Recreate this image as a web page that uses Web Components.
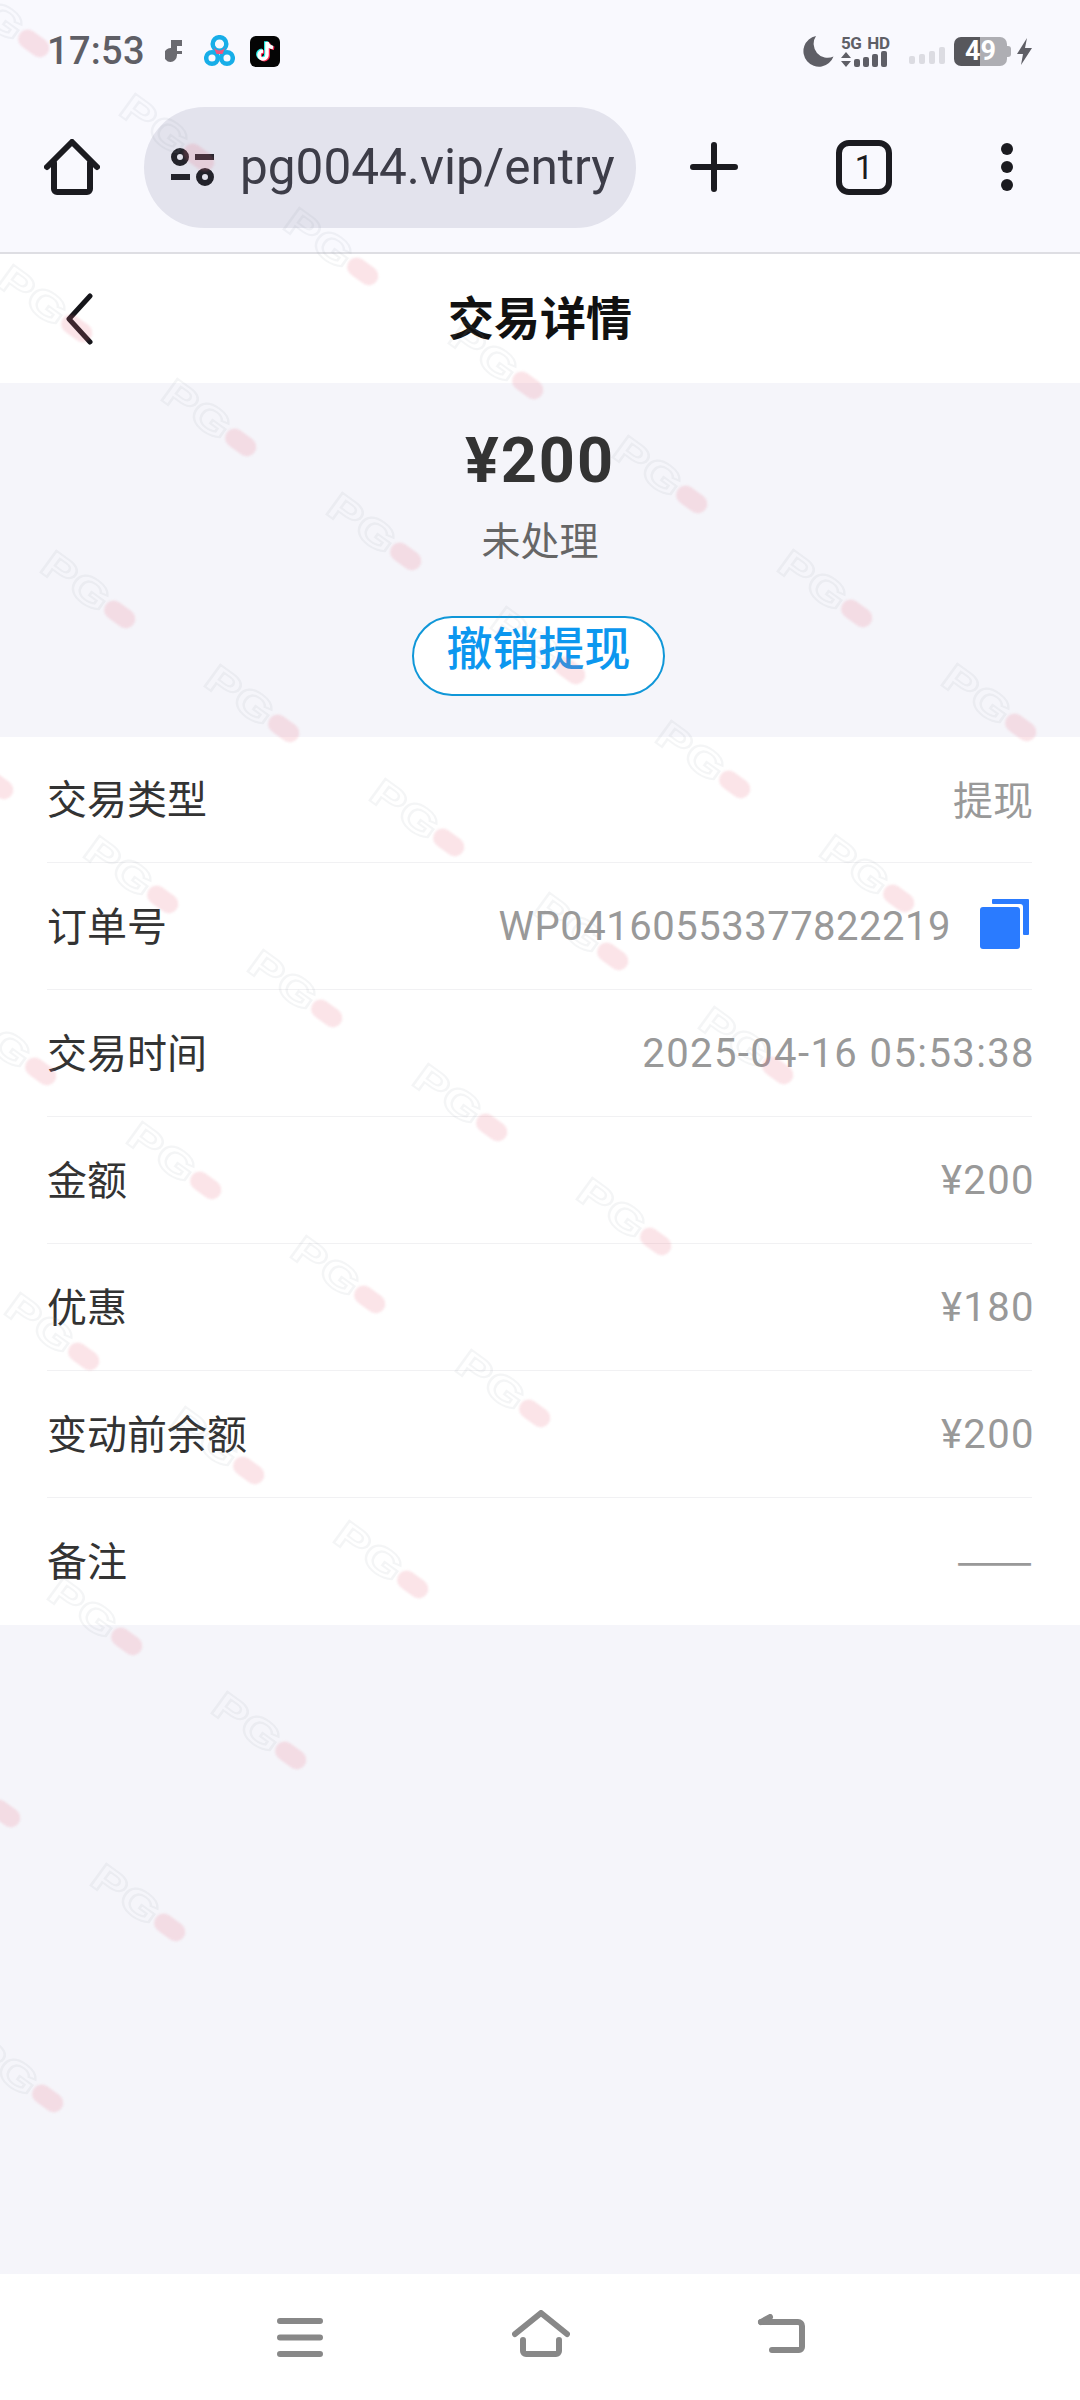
<!DOCTYPE html>
<html lang="zh">
<head>
<meta charset="utf-8">
<title>交易详情</title>
<style>
  html, body { margin: 0; padding: 0; }
  body {
    position: relative;
    width: 1080px;
    height: 2400px;
    overflow: hidden;
    display: flex;
    flex-direction: column;
    background: #f5f5fa;
    font-family: Roboto, "Noto Sans CJK SC", sans-serif;
  }
</style>
</head>
<body>
  <phone-status></phone-status>
  <browser-bar url="pg0044.vip/entry"></browser-bar>
  <page-header>交易详情</page-header>
  <tx-summary amount="¥200" state="未处理" action="撤销提现"></tx-summary>
  <tx-list>
    <tx-row label="交易类型" cjk>提现</tx-row>
    <tx-row label="订单号" copy>WP04160553377822219</tx-row>
    <tx-row label="交易时间">2025-04-16 05:53:38</tx-row>
    <tx-row label="金额">¥200</tx-row>
    <tx-row label="优惠">¥180</tx-row>
    <tx-row label="变动前余额">¥200</tx-row>
    <tx-row label="备注" cjk last>——</tx-row>
  </tx-list>
  <nav-bar></nav-bar>
  <water-marks></water-marks>

<script>
class PhoneStatus extends HTMLElement {
  constructor() {
    super();
    this.attachShadow({ mode: "open" }).innerHTML = `
      <style>
        :host { display: flex; align-items: center; height: 90px; padding: 12px 48px 0 47px; box-sizing: border-box; background: #f9f9fe; color: #5f5f66; }
        .time { font: 500 38px Roboto, sans-serif; width: 118px; letter-spacing: .3px; }
        svg { display: block; flex: none; }
        .right { margin-left: auto; display: flex; align-items: center; }
        .net { font: 700 17px/16px Roboto, sans-serif; letter-spacing: -.4px; word-spacing: 2px; white-space: nowrap; width: 47px; margin-left: 7px; color: #5f5f66; }
        .battery {
          position: relative; width: 53px; height: 29px; margin-left: 9px; border-radius: 7px;
          background: linear-gradient(90deg, #57575c 0 50%, #aeaeb3 50% 100%);
          color: #fff; font: 700 27px/29px Roboto, sans-serif; text-align: center;
        }
        .battery::after { content: ""; position: absolute; right: -4px; top: 9px; width: 4px; height: 11px; border-radius: 0 3px 3px 0; background: #aeaeb3; }
      </style>
      <div class="time">17:53</div>
      <svg width="18" height="24" viewBox="0 0 18 24" style="margin-right:21px"><path d="M6 1h11v6h-5v9a6.500 7 0 1 1-6-7z" fill="#6a6a70"/><rect x="0" y="12" width="17" height="3" fill="#6a6a70"/></svg>
      <svg width="31" height="32" viewBox="0 0 31 32" fill="none" style="margin-right:15px">
        <circle cx="8" cy="23" r="5.800" stroke="#18aee8" stroke-width="4.500"/>
        <circle cx="23" cy="23" r="5.800" stroke="#18aee8" stroke-width="4.500"/>
        <circle cx="15.500" cy="9" r="6.800" stroke="#18aee8" stroke-width="4.500"/>
        <path d="M9.500 12a7 7 0 0 0 12 0l-3 7h-6z" fill="#f2557e"/>
        <circle cx="15.500" cy="9" r="4" fill="#f9f9fe"/>
      </svg>
      <svg width="30" height="31" viewBox="0 0 30 31">
        <rect width="30" height="31" rx="6" fill="#050505"/>
        <path d="M17 6v13a4 4 0 1 1-4-4M17 6c.5 3 2.500 5 6 5.500" fill="none" stroke="#25f4ee" stroke-width="3.500" transform="translate(-1.200 -.8)"/>
        <path d="M17 6v13a4 4 0 1 1-4-4M17 6c.5 3 2.500 5 6 5.500" fill="none" stroke="#fe2c55" stroke-width="3.500" transform="translate(1.200 .8)"/>
        <path d="M17 6v13a4 4 0 1 1-4-4M17 6c.5 3 2.500 5 6 5.500" fill="none" stroke="#fff" stroke-width="3.500"/>
      </svg>
      <div class="right">
        <svg width="33" height="33" viewBox="0 0 33 33"><path d="M15 1a15.500 15.500 0 1 0 17.500 20.500A14 14 0 0 1 15 1z" fill="#5f5f66"/></svg>
        <div class="net">5G HD<svg width="47" height="17" viewBox="0 0 47 17" fill="#5f5f66"><path d="M5 1l5 6H0zM5 16l5-6H0z"/><rect x="13" y="8" width="6" height="8" rx="2"/><rect x="22" y="6" width="6" height="10" rx="2"/><rect x="31" y="3" width="6" height="13" rx="2"/><rect x="40" y="0" width="6" height="16" rx="2"/></svg></div>
        <svg width="36" height="20" viewBox="0 0 36 20" fill="#dcdce2" style="margin:10px 0 0 21px"><rect x="0" y="10" width="6" height="8" rx="2"/><rect x="10" y="8" width="6" height="10" rx="2"/><rect x="20" y="5" width="6" height="13" rx="2"/><rect x="30" y="1" width="6" height="17" rx="2"/></svg>
        <div class="battery">49</div>
        <svg width="15" height="27" viewBox="0 0 15 27" style="margin-left:10px"><path d="M10 0L0 16h6l-2 11 11-17H8z" fill="#5f5f66"/></svg>
      </div>
    `;
  }
}

class BrowserBar extends HTMLElement {
  constructor() {
    super();
    this.attachShadow({ mode: "open" }).innerHTML = `
      <style>
        :host { display: flex; align-items: center; height: 164px; padding: 17px 0 25px 44px; box-sizing: border-box; background: #f9f9fe; border-bottom: 2px solid #dedee3; color: #1b1b20; }
        svg { display: block; flex: none; }
        .pill { width: 492px; height: 121px; margin-left: 44px; border-radius: 61px; background: #e3e3ed; display: flex; align-items: center; padding-left: 26px; box-sizing: border-box; overflow: hidden; flex: none; }
        .url { margin-left: 25px; font: 400 49.500px Roboto, sans-serif; color: #3d3d48; white-space: nowrap; }
        .tab { width: 56px; height: 55px; margin-left: 98px; border: 6px solid #1b1b20; border-radius: 13px; box-sizing: border-box; display: flex; align-items: center; justify-content: center; font: 400 33px Roboto, sans-serif; flex: none; }
      </style>
      <svg width="56" height="56" viewBox="0 0 56 56" fill="none" stroke="#1b1b20" stroke-width="6" stroke-linejoin="round" stroke-linecap="round"><path d="M3 28L28 3l25 25"/><path d="M10 24v26a3 3 0 0 0 3 3h30a3 3 0 0 0 3-3V24"/></svg>
      <div class="pill">
        <svg width="45" height="38" viewBox="0 0 45 38" fill="none" stroke="#23232b" stroke-width="6"><circle cx="10" cy="9" r="6"/><path d="M25 9h19M1 29h19"/><circle cx="35" cy="29" r="6"/></svg>
        <span class="url">${this.getAttribute("url")}</span>
      </div>
      <svg width="48" height="50" viewBox="0 0 48 50" stroke="#1b1b20" stroke-width="6" stroke-linecap="round" style="margin-left:54px"><path d="M24 3v44M3 25h42"/></svg>
      <div class="tab">1</div>
      <svg width="12" height="48" viewBox="0 0 12 48" fill="#1b1b20" style="margin-left:109px"><circle cx="6" cy="6" r="6"/><circle cx="6" cy="24" r="6"/><circle cx="6" cy="42" r="6"/></svg>
    `;
  }
}

class PageHeader extends HTMLElement {
  constructor() {
    super();
    this.attachShadow({ mode: "open" }).innerHTML = `
      <style>
        :host { display: flex; align-items: center; justify-content: center; position: relative; height: 129px; padding-bottom: 8px; box-sizing: border-box; background: #fff; color: #111; font: 700 46px "Noto Sans CJK SC", sans-serif; }
        svg { position: absolute; left: 64px; top: 39px; }
      </style>
      <svg width="30" height="52" viewBox="0 0 30 52" fill="none" stroke="#15151a" stroke-width="5" stroke-linecap="round" stroke-linejoin="round"><path d="M26 3L5 26l21 23"/></svg>
      <slot></slot>
    `;
  }
}

class TxSummary extends HTMLElement {
  constructor() {
    super();
    this.attachShadow({ mode: "open" }).innerHTML = `
      <style>
        :host { display: flex; flex-direction: column; align-items: center; height: 353.500px; box-sizing: border-box; padding-top: 40px; background: #f5f5fa; }
        .amount { font: 700 63px/1.2 Roboto, "Noto Sans CJK SC", sans-serif; letter-spacing: 2px; color: #333; }
        .state { margin-top: 14px; font: 400 39px/1.3 "Noto Sans CJK SC", sans-serif; color: #666; }
        .action { margin-top: 53px; margin-left: -3px; width: 253px; height: 80px; box-sizing: border-box; border: 2.500px solid #1097d8; border-radius: 40px; background: #fff; text-align: center; font: 500 46px/54px "Noto Sans CJK SC", sans-serif; color: #0c97ef; }
      </style>
      <div class="amount">${this.getAttribute("amount")}</div>
      <div class="state">${this.getAttribute("state")}</div>
      <div class="action">${this.getAttribute("action")}</div>
    `;
  }
}

class TxList extends HTMLElement {
  constructor() {
    super();
    this.attachShadow({ mode: "open" }).innerHTML = `
      <style>
        :host { display: block; padding: 0 48px 0 47px; background: #fff; flex: none; }
      </style>
      <slot></slot>
    `;
  }
}

class TxRow extends HTMLElement {
  constructor() {
    super();
    const copy = this.hasAttribute("copy") ? `
      <svg width="50" height="51" viewBox="0 0 50 51" fill="#2a7bff" style="margin:0 3px 7px 29px;flex:none">
        <path d="M13 1a1 1 0 0 0-1 1v3a1 1 0 0 0 1 1h27a3 3 0 0 1 3 3v27a1 1 0 0 0 1 1h4a1 1 0 0 0 1-1V2a1 1 0 0 0-1-1z"/>
        <rect x="0" y="9" width="40" height="42" rx="3"/>
      </svg>` : "";
    this.attachShadow({ mode: "open" }).innerHTML = `
      <style>
        :host { display: flex; align-items: center; justify-content: space-between; height: 126.900px; box-sizing: border-box; border-bottom: 1.500px solid #f1f1f3; }
        :host([last]) { border-bottom: 0; }
        .label { padding-bottom: 4px; font: 400 40px "Noto Sans CJK SC", sans-serif; color: #333; }
        .value { display: flex; align-items: center; margin: 1px -3px 0 0; font: 400 40px Roboto, "Noto Sans CJK SC", sans-serif; letter-spacing: 1.400px; color: #999; }
        :host([copy]) .value { margin-right: -1px; letter-spacing: .5px; }
        :host([cjk]) .value { margin: 0 -1px 3px 0; font-family: "Noto Sans CJK SC", sans-serif; letter-spacing: 0; }
        :host([last]) .value { margin: 0 -1px 9px 0; font-size: 46px; line-height: 1; }
      </style>
      <div class="label">${this.getAttribute("label")}</div>
      <div class="value"><slot></slot>${copy}</div>
    `;
  }
}

class NavBar extends HTMLElement {
  constructor() {
    super();
    this.attachShadow({ mode: "open" }).innerHTML = `
      <style>
        :host { display: flex; align-items: center; margin-top: auto; height: 126px; padding-left: 277px; box-sizing: border-box; background: #fff; }
        svg { display: block; flex: none; }
      </style>
      <svg width="46" height="39" viewBox="0 0 46 39" stroke="#888" stroke-width="6" stroke-linecap="round"><path d="M3 3h40M3 19.500h40M3 36h40"/></svg>
      <svg width="58" height="47" viewBox="0 0 58 47" fill="none" stroke="#888" stroke-width="6" stroke-linecap="round" stroke-linejoin="round" style="margin:0 0 8px 189px"><path d="M3 24L29 3l26 21"/><path d="M11 30v11a3 3 0 0 0 3 3h30a3 3 0 0 0 3-3V30"/></svg>
      <svg width="48" height="39" viewBox="0 0 48 39" fill="none" stroke="#888" stroke-width="6" stroke-linecap="round" stroke-linejoin="round" style="margin:0 0 8px 187px"><path d="M4 8h37a4 4 0 0 1 4 4v21a3 3 0 0 1-3 3H15"/><path d="M4 8l9-5"/></svg>
    `;
  }
}

// faint repeated stamp laid over the whole page, clipped by the viewport
class WaterMarks extends HTMLElement {
  constructor() {
    super();
    const origin = [363, 271];
    const a = [164.5, 114];
    const b = [-121.6, 171.4];
    let marks = "";
    for (let row = 0; row <= 8; row++) {
      for (let col = -2; col <= 4; col++) {
        const x = origin[0] + col * a[0] + row * b[0];
        const y = origin[1] + col * a[1] + row * b[1];
        if (x < -40 || y < -40) continue;
        marks += `<div class="mark" style="left:${(x - 92).toFixed(1)}px;top:${(y - 15).toFixed(1)}px"><span>PG</span><i></i></div>`;
      }
    }
    this.attachShadow({ mode: "open" }).innerHTML = `
      <style>
        :host { display: block; position: absolute; inset: 0; overflow: hidden; pointer-events: none; }
        .mark { position: absolute; display: flex; align-items: center; width: 110px; height: 30px; transform: rotate(36deg); transform-origin: 92px 15px; }
        span { display: block; width: 75px; flex: none; font: 700 39px/30px "Liberation Sans", sans-serif; transform: scaleX(1.33); transform-origin: 0 50%; color: transparent; -webkit-text-stroke: 2px rgba(150, 155, 165, .1); }
        i { width: 34px; height: 19px; flex: none; border-radius: 10px; background: rgba(232, 110, 135, .19); filter: blur(1px); }
      </style>
      ${marks}
    `;
  }
}

customElements.define("phone-status", PhoneStatus);
customElements.define("browser-bar", BrowserBar);
customElements.define("page-header", PageHeader);
customElements.define("tx-summary", TxSummary);
customElements.define("tx-list", TxList);
customElements.define("tx-row", TxRow);
customElements.define("nav-bar", NavBar);
customElements.define("water-marks", WaterMarks);
</script>
</body>
</html>
